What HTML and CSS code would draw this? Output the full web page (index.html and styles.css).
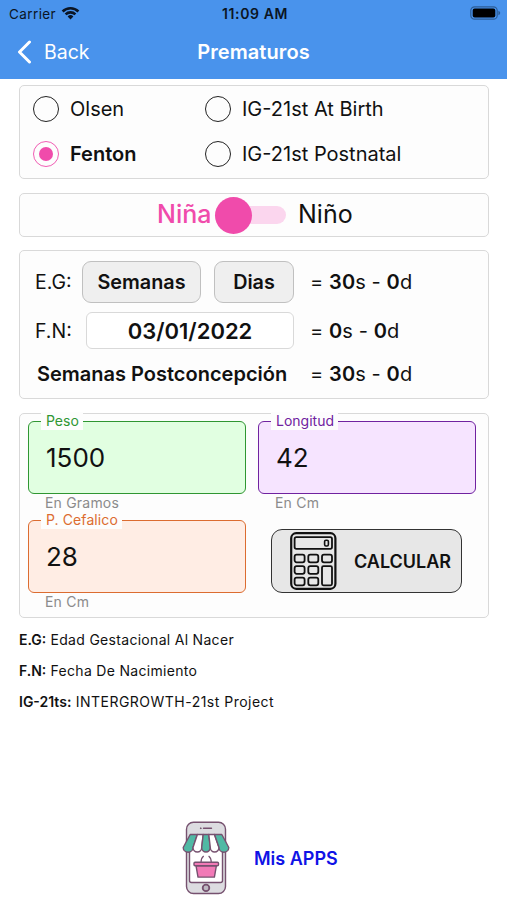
FILE: index.html
```html
<!DOCTYPE html>
<html lang="es">
<head>
<meta charset="utf-8">
<title>Prematuros</title>
<link rel="stylesheet" href="styles.css">
</head>
<body>
<header class="header">
  <div class="status">
    <div class="carrier"><span>Carrier</span>
      <svg class="wifi" width="19" height="14" viewBox="0 0 19 14"><path d="M.7 4.500a12.500 12.500 0 0 1 17.600 0l-1.800 1.900a9.900 9.900 0 0 0-14 0zM3.700 7.500a8.200 8.200 0 0 1 11.600 0l-1.800 1.800a5.700 5.700 0 0 0-8 0zM6.600 10.400a4.100 4.100 0 0 1 5.800 0L9.500 13.400z"/></svg>
    </div>
    <span class="time">11:09 AM</span>
    <svg class="battery" width="31" height="14" viewBox="0 0 31 14"><rect x=".8" y=".8" width="26.400" height="12.400" rx="3.800" fill="none" stroke="#2c5d96" stroke-width="1.200"/><rect x="2.700" y="2.600" width="22.600" height="8.800" rx="2"/><path d="M28.400 4.800c2.400.8 2.400 3.600 0 4.400z" fill="#2c5d96"/></svg>
  </div>
  <nav class="nav">
    <a class="back"><svg width="16" height="24" viewBox="0 0 16 24"><path d="M13.500 2 3.500 12l10 10" fill="none" stroke="#fff" stroke-width="3" stroke-linecap="round" stroke-linejoin="round"/></svg><span>Back</span></a>
    <h1 class="title">Prematuros</h1>
  </nav>
</header>
<main class="main">
  <section class="card methods">
    <label class="option"><i class="radio"></i><span>Olsen</span></label>
    <label class="option"><i class="radio"></i><span>IG-21st At Birth</span></label>
    <label class="option"><i class="radio on"></i><b>Fenton</b></label>
    <label class="option"><i class="radio"></i><span>IG-21st Postnatal</span></label>
  </section>
  <section class="card sex">
    <span class="girl">Niña</span><span class="switch"><i class="knob"></i></span><span class="boy">Niño</span>
  </section>
  <section class="card age">
    <div class="row row-eg"><span class="key">E.G:</span><button class="pick weeks">Semanas</button><button class="pick days">Dias</button><span class="result">= <b>30</b>s - <b>0</b>d</span></div>
    <div class="row row-fn"><span class="key">F.N:</span><span class="date">03/01/2022</span><span class="result">= <b>0</b>s - <b>0</b>d</span></div>
    <div class="row row-pc"><b class="post">Semanas Postconcepción</b><span class="result">= <b>30</b>s - <b>0</b>d</span></div>
  </section>
  <section class="card measures">
    <div class="field green"><div class="box"><span class="label">Peso</span><span class="value">1500</span></div><span class="help">En Gramos</span></div>
    <div class="field purple"><div class="box"><span class="label">Longitud</span><span class="value">42</span></div><span class="help">En Cm</span></div>
    <div class="field orange"><div class="box"><span class="label">P. Cefalico</span><span class="value">28</span></div><span class="help">En Cm</span></div>
    <button class="calc">
      <svg width="47" height="58" viewBox="0 0 47 58" fill="none" stroke="#111" stroke-width="1.800"><rect x="1.200" y="1.200" width="44.200" height="55.600" rx="5" stroke-width="2.200"/><rect x="4.600" y="5.200" width="37.400" height="11.600" rx="1.800"/><rect x="34.600" y="8.200" width="3.800" height="5.800" rx="1.400" stroke-width="1.600"/><rect x="4.600" y="22.700" width="10" height="7.600" rx="2"/><rect x="18.300" y="22.700" width="10" height="7.600" rx="2"/><rect x="32" y="22.700" width="10" height="7.600" rx="2"/><rect x="4.600" y="34.200" width="10" height="7.600" rx="2"/><rect x="18.300" y="34.200" width="10" height="7.600" rx="2"/><rect x="4.600" y="45.700" width="10" height="7.600" rx="2"/><rect x="18.300" y="45.700" width="10" height="7.600" rx="2"/><rect x="32" y="34.200" width="10" height="19.100" rx="1.500"/></svg>
      <span>CALCULAR</span>
    </button>
  </section>
  <ul class="legend">
    <li><b>E.G:</b> Edad Gestacional Al Nacer</li>
    <li><b>F.N:</b> Fecha De Nacimiento</li>
    <li><b>IG-21ts:</b> INTERGROWTH-21st Project</li>
  </ul>
</main>
<footer class="footer">
  <svg width="48" height="74" viewBox="0 0 48 74" stroke="#76516f" stroke-width="1.400" stroke-linejoin="round">
    <rect x="4.500" y="1.200" width="39" height="71.300" rx="7" fill="#dcdce0"/>
    <path d="M7.500 20h33v39.500a2 2 0 0 1-2 2h-29a2 2 0 0 1-2-2z" fill="#fff"/>
    <circle cx="18.800" cy="7.200" r=".5" stroke-width=".7"/><path d="M21.500 7.200h8" stroke-linecap="round"/>
    <circle cx="24" cy="66.900" r="3.300" fill="#bdb9c2" stroke-width="1.800"/>
    <path d="M8.200 13.500h7.200L11 26.500a4.900 4.700 0 0 1-9.800 0z" fill="#50b9a4"/>
    <path d="M15.400 13.500h5.800L19.700 26.500a4.350 4.500 0 0 1-8.700 0z" fill="#fff"/>
    <path d="M21.200 13.500h5.600L28.300 26.500a4.300 4.500 0 0 1-8.600 0z" fill="#50b9a4"/>
    <path d="M26.800 13.500h5.700L37 26.500a4.350 4.500 0 0 1-8.700 0z" fill="#fff"/>
    <path d="M32.500 13.500h7.300L46.800 26.500a4.900 4.700 0 0 1-9.800 0z" fill="#50b9a4"/>
    <path d="M19 41.500c0-3.300 1-5.200 2.700-6.500M29.300 41.500c0-3.300-1-5.200-2.700-6.500" fill="none" stroke-width="1.200"/>
    <path d="M14 44.700h20.400l-2 11.400H16z" fill="#f27ab7"/>
    <rect x="12" y="41.300" width="24.500" height="3.500" rx="1" fill="#f27ab7"/>
  </svg>
  <a class="apps">Mis APPS</a>
</footer>
</body>
</html>
```

FILE: styles.css
```css
* { box-sizing: border-box; }
body { margin: 0; height: 900px; display: flex; flex-direction: column; background: #fff; color: #111; font-family: Inter, "Liberation Sans", sans-serif; overflow: hidden; }
b { font-weight: 600; }
svg { display: block; flex: none; }
.header { height: 79px; background: #4993ec; }
.status { height: 27px; display: grid; grid-template-columns: 1fr auto 1fr; align-items: center; padding: 0 6px 0 9px; color: #0b1524; }
.carrier { display: flex; align-items: center; gap: 5px; font-size: 13.5px; letter-spacing: .4px; }
.wifi { fill: #0b1524; margin-top: -2px; }
.time { font-size: 14px; font-weight: 600; letter-spacing: .6px; }
.battery { justify-self: end; margin-top: -1px; }
.nav { height: 50px; display: grid; grid-template-columns: 1fr auto 1fr; align-items: center; padding: 0 16px; color: #fff; }
.back { display: flex; align-items: center; gap: 12px; font-size: 19.5px; }
.title { margin: 0; font-size: 20px; font-weight: 600; letter-spacing: .1px; }
.main { padding: 6px 18px 0 19px; display: flex; flex-direction: column; }
.card { border: 1px solid #d9d9d9; border-radius: 5px; background: #fdfdfd; }
.methods { height: 94px; display: grid; grid-template-columns: 172px 1fr; grid-template-rows: 45px 45px; padding: 0 13px; }
.option { display: flex; align-items: center; gap: 11px; font-size: 20px; }
.radio { width: 26px; height: 26px; border: 1px solid #222; border-radius: 50%; display: grid; place-items: center; }
.radio.on { border-color: #f15db4; }
.radio.on::after { content: ""; width: 14px; height: 14px; border-radius: 50%; background: #f04bab; }
.sex { height: 44px; margin-top: 14px; display: flex; align-items: center; padding-left: 137px; font-size: 25px; }
.sex .girl, .sex .boy { margin-top: -2px; }
.girl { width: 58px; color: #f04bab; font-weight: 500; }
.switch { width: 71px; height: 18px; border-radius: 9px; background: #fbd6ee; display: flex; align-items: center; }
.knob { width: 37px; height: 37px; border-radius: 50%; background: #f04bab; flex: none; }
.boy { margin-left: 12px; }
.age { height: 149px; margin-top: 13px; padding: 10px 0 0 15px; font-size: 20px; }
.row { display: flex; align-items: center; }
.key { width: 47px; font-size: 19.5px; }
.pick { height: 42px; padding: 0; border: 1px solid #c0c0c0; border-radius: 9px; background: #efefef; color: #111; font: 600 19.8px Inter, sans-serif; }
.weeks { width: 119px; }
.days { width: 80px; margin-left: 13px; }
.result { margin-left: 16px; letter-spacing: .1px; }
.row-fn { margin-top: 9px; }
.date { width: 208px; height: 37px; margin-left: 4px; border: 1px solid #d9d9d9; border-radius: 6px; background: #fff; display: grid; place-items: center; font-size: 22px; font-weight: 600; }
.row-pc { height: 30px; margin-top: 10px; }
.post { width: 259px; padding-left: 2px; white-space: nowrap; }
.measures { height: 205px; margin-top: 14px; padding: 7px 0 0 8px; display: grid; grid-template-columns: 218px 218px; column-gap: 12px; grid-template-rows: 99px 99px; }
.box { position: relative; height: 73px; border: 1px solid; border-radius: 6px; padding: 0 17px; display: flex; align-items: center; }
.label { position: absolute; left: 12px; top: -10px; padding: 0 4px 0 5px; height: 18px; line-height: 18px; background: #fdfdfd; font-size: 14px; white-space: nowrap; }
.orange .label { letter-spacing: .1px; }
.value { font-size: 26px; color: #111; }
.help { display: block; padding-left: 17px; font-size: 14px; line-height: 18px; letter-spacing: .2px; color: #8b8b8b; }
.green .box { color: #2f9632; background: #e1ffe1; }
.purple .box { color: #7022a0; background: #f6e4ff; }
.orange .box { color: #dc6c30; background: #ffede4; }
.calc { width: 191px; height: 64px; margin: 9px 0 0 13px; padding: 0 0 0 18px; border: 1px solid #333; border-radius: 11px; background: #e7e7e7; color: #111; display: flex; align-items: center; gap: 17px; font: 600 18px Inter, sans-serif; }
.legend { list-style: none; margin: 6px 0 0; padding: 0; font-size: 14px; line-height: 31px; letter-spacing: .3px; }
.legend li:last-child { letter-spacing: .48px; }
.legend b { letter-spacing: 0; }
.footer { margin-top: auto; padding: 0 0 5px 182px; display: flex; align-items: center; gap: 24px; }
.apps { color: #1013e6; font-size: 18px; font-weight: 600; }
```
